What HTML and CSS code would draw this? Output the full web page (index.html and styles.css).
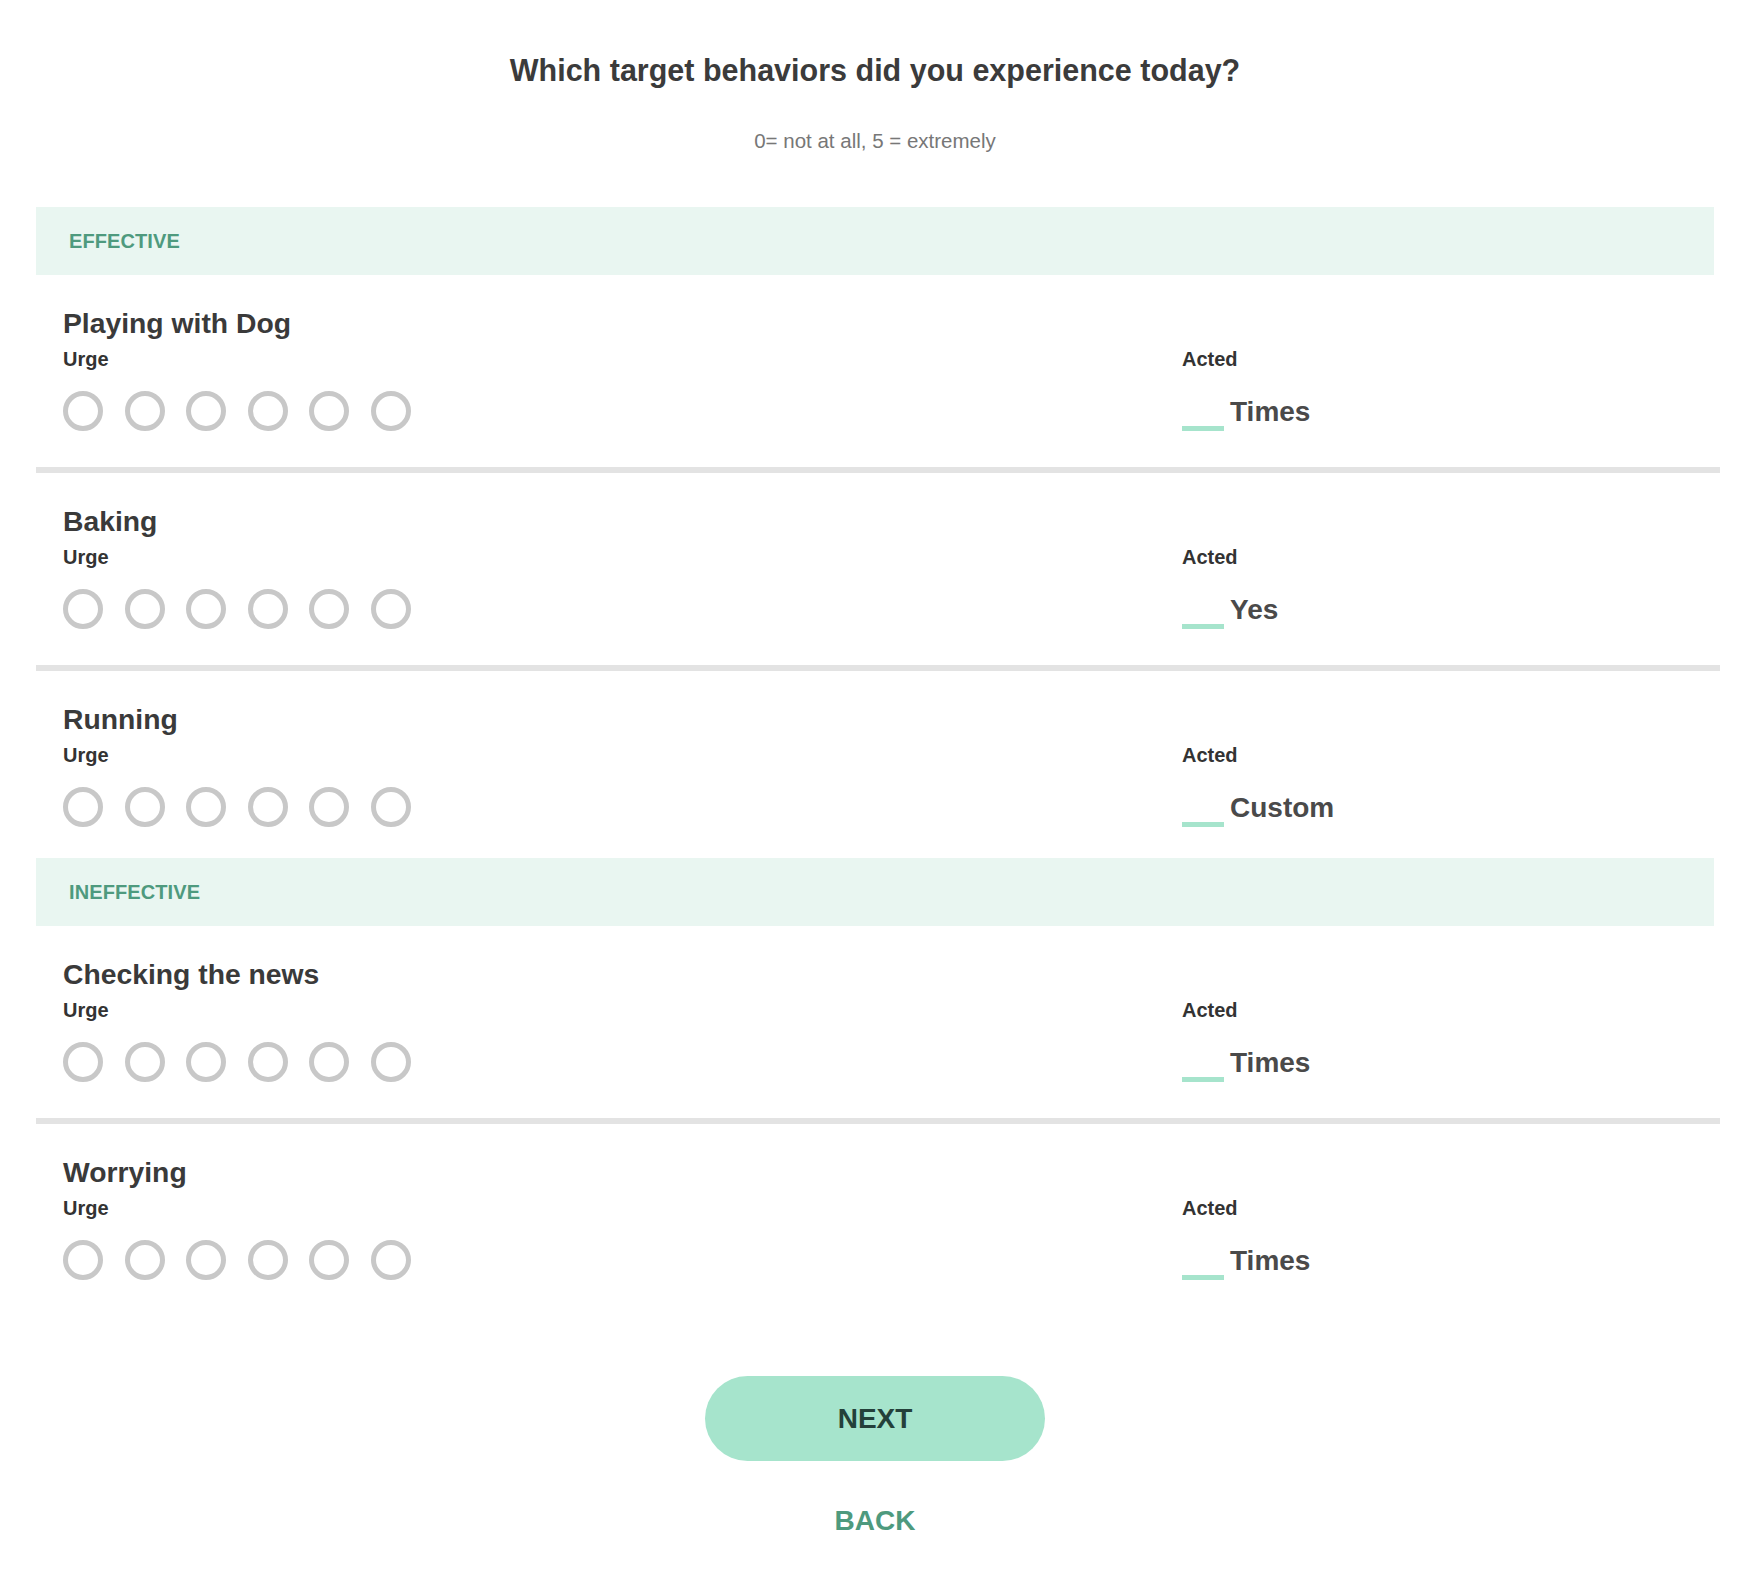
FILE: index.html
```html
<!DOCTYPE html>
<html lang="en">
<head>
<meta charset="utf-8">
<title>Target behaviors</title>
<link rel="stylesheet" href="styles.css">
</head>
<body>
<main class="page">
  <h1 class="title">Which target behaviors did you experience today?</h1>
  <p class="subtitle">0= not at all, 5 = extremely</p>

  <section class="group">
    <div class="band">EFFECTIVE</div>

    <div class="row">
      <div class="left">
        <h2 class="name">Playing with Dog</h2>
        <div class="label">Urge</div>
        <div class="scale">
          <input type="radio" name="r1"><input type="radio" name="r1"><input type="radio" name="r1"><input type="radio" name="r1"><input type="radio" name="r1"><input type="radio" name="r1">
        </div>
      </div>
      <div class="right">
        <div class="label">Acted</div>
        <div class="acted"><input class="count" type="text"><span class="unit">Times</span></div>
      </div>
    </div>
    <div class="divider"></div>

    <div class="row">
      <div class="left">
        <h2 class="name">Baking</h2>
        <div class="label">Urge</div>
        <div class="scale">
          <input type="radio" name="r2"><input type="radio" name="r2"><input type="radio" name="r2"><input type="radio" name="r2"><input type="radio" name="r2"><input type="radio" name="r2">
        </div>
      </div>
      <div class="right">
        <div class="label">Acted</div>
        <div class="acted"><input class="count" type="text"><span class="unit">Yes</span></div>
      </div>
    </div>
    <div class="divider"></div>

    <div class="row">
      <div class="left">
        <h2 class="name">Running</h2>
        <div class="label">Urge</div>
        <div class="scale">
          <input type="radio" name="r3"><input type="radio" name="r3"><input type="radio" name="r3"><input type="radio" name="r3"><input type="radio" name="r3"><input type="radio" name="r3">
        </div>
      </div>
      <div class="right">
        <div class="label">Acted</div>
        <div class="acted"><input class="count" type="text"><span class="unit">Custom</span></div>
      </div>
    </div>
  </section>

  <section class="group">
    <div class="band">INEFFECTIVE</div>

    <div class="row">
      <div class="left">
        <h2 class="name">Checking the news</h2>
        <div class="label">Urge</div>
        <div class="scale">
          <input type="radio" name="r4"><input type="radio" name="r4"><input type="radio" name="r4"><input type="radio" name="r4"><input type="radio" name="r4"><input type="radio" name="r4">
        </div>
      </div>
      <div class="right">
        <div class="label">Acted</div>
        <div class="acted"><input class="count" type="text"><span class="unit">Times</span></div>
      </div>
    </div>
    <div class="divider"></div>

    <div class="row">
      <div class="left">
        <h2 class="name">Worrying</h2>
        <div class="label">Urge</div>
        <div class="scale">
          <input type="radio" name="r5"><input type="radio" name="r5"><input type="radio" name="r5"><input type="radio" name="r5"><input type="radio" name="r5"><input type="radio" name="r5">
        </div>
      </div>
      <div class="right">
        <div class="label">Acted</div>
        <div class="acted"><input class="count" type="text"><span class="unit">Times</span></div>
      </div>
    </div>
  </section>

  <div class="actions">
    <button class="next" type="button">NEXT</button>
    <button class="back" type="button">BACK</button>
  </div>
</main>
</body>
</html>
```
FILE: styles.css
```css
* { box-sizing: border-box; }

html, body {
  margin: 0;
  padding: 0;
  background: #ffffff;
}

body {
  font-family: "Liberation Sans", Arial, Helvetica, sans-serif;
  color: #3a3a3a;
}

.page {
  margin: 0 40px 0 36px;
  padding-top: 52px;
  padding-bottom: 30px;
}

.title {
  margin: 0;
  text-align: center;
  font-size: 30.5px;
  line-height: 36px;
  font-weight: 700;
  color: #3b3b3b;
}

.subtitle {
  margin: 41px 0 0;
  text-align: center;
  font-size: 20.5px;
  line-height: 24px;
  font-weight: 400;
  color: #777777;
}

.group:first-of-type {
  margin-top: 54px;
}

.band {
  height: 68px;
  display: flex;
  align-items: center;
  padding-left: 33px;
  background: #e9f6f1;
  color: #4e9a7e;
  font-size: 20px;
  font-weight: 700;
  letter-spacing: 0.1px;
}

.row {
  display: grid;
  grid-template-columns: 1119px 1fr;
  padding: 31px 27px 31px;
}

.name {
  margin: 0;
  font-size: 28.3px;
  line-height: 34px;
  font-weight: 700;
  color: #3a3a3a;
}

.label {
  margin-top: 7px;
  font-size: 20px;
  line-height: 24px;
  font-weight: 700;
  color: #333333;
}

.right .label {
  margin-top: 41px;
}

.scale {
  display: flex;
  gap: 21.6px;
  margin-top: 20px;
}

.scale input {
  appearance: none;
  -webkit-appearance: none;
  margin: 0;
  width: 40px;
  height: 40px;
  border: 5px solid #c8c8c8;
  border-radius: 50%;
  background: #ffffff;
}

.acted {
  display: flex;
  align-items: flex-end;
  margin-top: 20px;
  height: 40px;
}

.count {
  width: 42px;
  height: 40px;
  padding: 0;
  margin: 0;
  border: 0;
  border-bottom: 5px solid #a6e4cc;
  background: transparent;
  outline: none;
}

.unit {
  margin-left: 6px;
  font-size: 28px;
  line-height: 38px;
  font-weight: 700;
  color: #4a4a4a;
}

.divider {
  height: 6px;
  margin-top: 5px;
  margin-right: -6px;
  background: #e3e3e3;
}

.actions {
  display: flex;
  flex-direction: column;
  align-items: center;
  margin-top: 65px;
}

.next {
  width: 340px;
  height: 85px;
  border: 0;
  border-radius: 43px;
  background: #a6e4cc;
  color: #24403a;
  font-family: inherit;
  font-size: 28px;
  font-weight: 700;
  padding: 0;
  display: flex;
  align-items: center;
  justify-content: center;
}

.back {
  margin-top: 43px;
  border: 0;
  background: transparent;
  padding: 0;
  color: #4e9a7e;
  font-family: inherit;
  font-size: 28px;
  line-height: 34px;
  font-weight: 700;
}
```
